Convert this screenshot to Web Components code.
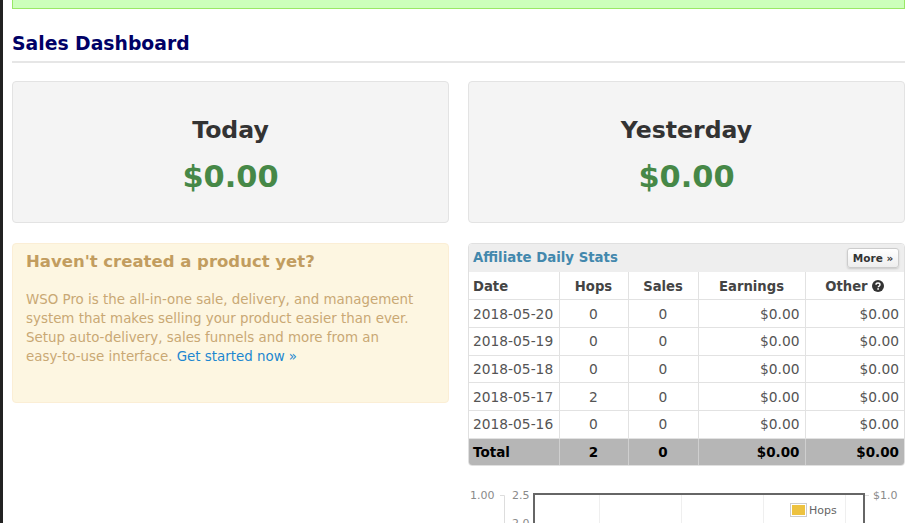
<!DOCTYPE html>
<html>
<head>
<meta charset="utf-8">
<style>
html, body { margin: 0; height: 100%; overflow: hidden; background: #fff; }
body { font-family: "DejaVu Sans", Verdana, sans-serif; font-size: 13px; color: #333; }
</style>
</head>
<body>
<dash-page>
    <notice-bar slot="notice"></notice-bar>
    <page-title slot="title">Sales Dashboard</page-title>
    <stat-card slot="today" label="Today" value="$0.00"></stat-card>
    <stat-card slot="yesterday" label="Yesterday" value="$0.00"></stat-card>
    <promo-box slot="promo" heading="Haven't created a product yet?">
        WSO Pro is the all-in-one sale, delivery, and management system that makes selling your product easier than ever. Setup auto-delivery, sales funnels and more from an easy-to-use interface. <a href="#" style="color:#1c87d0;text-decoration:none">Get started now »</a>
    </promo-box>
    <stats-table slot="stats"></stats-table>
    <hops-chart slot="chart"></hops-chart>
</dash-page>

<script>
class DashPage extends HTMLElement {
    connectedCallback() {
        let shadowRoot = this.attachShadow({mode: 'open'});
        shadowRoot.innerHTML = `
            <style>
:host { display: block; height: 523px; border-left: 3px solid #222; box-sizing: border-box; padding: 0 6px 0 9px; overflow: hidden; }
.grid { display: grid; grid-template-columns: 437px 437px; column-gap: 19px; margin-top: 18px; }
.left { margin-top: 20px; }
.right { margin-top: 20px; }
</style>
<slot name="notice"></slot>
<slot name="title"></slot>
<div class="grid">
    <slot name="today"></slot>
    <slot name="yesterday"></slot>
    <div class="left"><slot name="promo"></slot></div>
    <div class="right"><slot name="stats"></slot><slot name="chart"></slot></div>
</div>
`;
    }
}

class NoticeBar extends HTMLElement {
    connectedCallback() {
        let shadowRoot = this.attachShadow({mode: 'open'});
        shadowRoot.innerHTML = `
            <style>
:host { display: block; height: 8px; background: #ccffbb; border: 1px solid #99e866; border-top: 0; }
</style>`;
    }
}

class PageTitle extends HTMLElement {
    connectedCallback() {
        let shadowRoot = this.attachShadow({mode: 'open'});
        shadowRoot.innerHTML = `
            <style>
:host { display: block; height: 54px; box-sizing: border-box; padding-top: 23px; border-bottom: 2px solid #e6e6e6; color: #000066; font-size: 18.8px; font-weight: bold; line-height: 24px; }
</style>
<slot></slot>`;
    }
}

class StatCard extends HTMLElement {
    connectedCallback() {
        let shadowRoot = this.attachShadow({mode: 'open'});
        shadowRoot.innerHTML = `
            <style>
:host { display: block; height: 142px; box-sizing: border-box; background: #f4f4f4; border: 1px solid #e3e3e3; border-radius: 4px; text-align: center; padding-top: 33px; }
.label { font-size: 23.6px; font-weight: bold; line-height: 30px; color: #333; }
.value { font-size: 30.4px; font-weight: bold; line-height: 40px; color: #468847; margin-top: 12px; }
</style>
<div class="label">${this.getAttribute('label')}</div>
<div class="value">${this.getAttribute('value')}</div>`;
    }
}

class PromoBox extends HTMLElement {
    connectedCallback() {
        let shadowRoot = this.attachShadow({mode: 'open'});
        shadowRoot.innerHTML = `
            <style>
:host { display: block; height: 160px; box-sizing: border-box; background: #fdf6e1; border: 1px solid #fbeed5; border-radius: 4px; padding: 7px 30px 7px 13px; color: #c29d5f; }
h4 { margin: 0 0 17px; font-size: 16.5px; line-height: 22px; font-weight: bold; }
p { margin: 0; font-size: 13.4px; line-height: 19px; color: #c9a874; }
</style>
<h4>${this.getAttribute('heading')}</h4>
<p><slot></slot></p>`;
    }
}

class StatsTable extends HTMLElement {
    connectedCallback() {
        const rows = [
            ['2018-05-20', 0, 0],
            ['2018-05-19', 0, 0],
            ['2018-05-18', 0, 0],
            ['2018-05-17', 2, 0],
            ['2018-05-16', 0, 0]
        ];
        let shadowRoot = this.attachShadow({mode: 'open'});
        shadowRoot.innerHTML = `
            <style>
:host { display: block; border: 1px solid #e0e0e0; border-radius: 4px; overflow: hidden; box-sizing: border-box; width: 437px; height: 223px; }
.head { display: flex; align-items: center; justify-content: space-between; height: 28px; background: #eeeeee; padding: 0 5px 0 4px; }
.head b { color: #4388ad; font-size: 13.3px; position: relative; top: -1px; }
.more { box-sizing: border-box; width: 52px; height: 20px; text-align: center; font-size: 10.5px; font-weight: bold; color: #333; background: linear-gradient(#fff, #eee); border: 1px solid #ccc; border-radius: 3px; line-height: 18px; box-shadow: 0 1px 2px rgba(0,0,0,.15); white-space: nowrap; }
table { border-collapse: collapse; table-layout: fixed; width: 100%; font-size: 13.8px; color: #555; }
th, td { border: 1px solid #e2e2e2; padding: 0 4px; height: 27.7px; box-sizing: border-box; }
th { font-size: 13.2px; color: #444; padding-top: 2px; }
.r { padding-right: 5px; }
tr > :first-child { border-left: 0; text-align: left; }
tr > :last-child { border-right: 0; }
tfoot td { border-bottom: 0; background: #b6b6b6; color: #000; font-weight: bold; font-size: 13.5px; border-color: #cfcfcf; }
thead th { border-top: 0; }
.c { text-align: center; }
.r { text-align: right; }
svg { vertical-align: -1px; }
</style>
<div class="head"><b>Affiliate Daily Stats</b><span class="more">More »</span></div>
<table>
<colgroup><col style="width:90px"><col style="width:69px"><col style="width:70px"><col style="width:107px"><col></colgroup>
<thead><tr><th>Date</th><th class="c">Hops</th><th class="c">Sales</th><th class="c">Earnings</th><th class="c">Other
<svg width="12" height="12" viewBox="0 0 12 12"><circle cx="6" cy="6" r="6" fill="#333"/><path d="M4 4.7C4 3.5 4.9 3 6 3s2 .6 2 1.7c0 1.5-1.7 1.3-1.7 2.6" fill="none" stroke="#fff" stroke-width="1.4"/><rect x="5.3" y="8.2" width="1.6" height="1.5" fill="#fff"/></svg></th></tr></thead>
<tbody>${rows.map(r => `<tr><td>${r[0]}</td><td class="c">${r[1]}</td><td class="c">${r[2]}</td><td class="r">$0.00</td><td class="r">$0.00</td></tr>`).join('')}</tbody>
<tfoot><tr><td>Total</td><td class="c">2</td><td class="c">0</td><td class="r">$0.00</td><td class="r">$0.00</td></tr></tfoot>
</table>`;
    }
}

class HopsChart extends HTMLElement {
    connectedCallback() {
        let shadowRoot = this.attachShadow({mode: 'open'});
        shadowRoot.innerHTML = `
            <style>
:host { display: block; width: 437px; height: 57px; }
svg { display: block; overflow: hidden; }
text { font-family: "DejaVu Sans", Verdana, sans-serif; font-size: 11px; fill: #8a8a8a; }
</style>
<svg width="437" height="57" viewBox="468 466 437 57">
    <text x="470" y="499">1.00</text>
    <path d="M500 495.5H504.5V523" fill="none" stroke="#dddddd"/>
    <text x="512" y="499">2.5</text>
    <text x="512" y="527">2.0</text>
    <path d="M599.5 494V523M681.5 494V523M763.5 494V523M845.5 494V523" stroke="#efefef"/>
    <path d="M534 523V494H864V523" fill="none" stroke="#666" stroke-width="2"/>
    <path d="M865 495.5H869" stroke="#dddddd"/>
    <text x="873" y="499">$1.0</text>
    <rect x="790.5" y="503.5" width="16" height="13" fill="#fff" stroke="#ccc"/>
    <rect x="792" y="505" width="13" height="10" fill="#edc240"/>
    <text x="809" y="514" style="fill:#666">Hops</text>
</svg>`;
    }
}

window.customElements.define('dash-page', DashPage);
window.customElements.define('notice-bar', NoticeBar);
window.customElements.define('page-title', PageTitle);
window.customElements.define('stat-card', StatCard);
window.customElements.define('promo-box', PromoBox);
window.customElements.define('stats-table', StatsTable);
window.customElements.define('hops-chart', HopsChart);
</script>
</body>
</html>
